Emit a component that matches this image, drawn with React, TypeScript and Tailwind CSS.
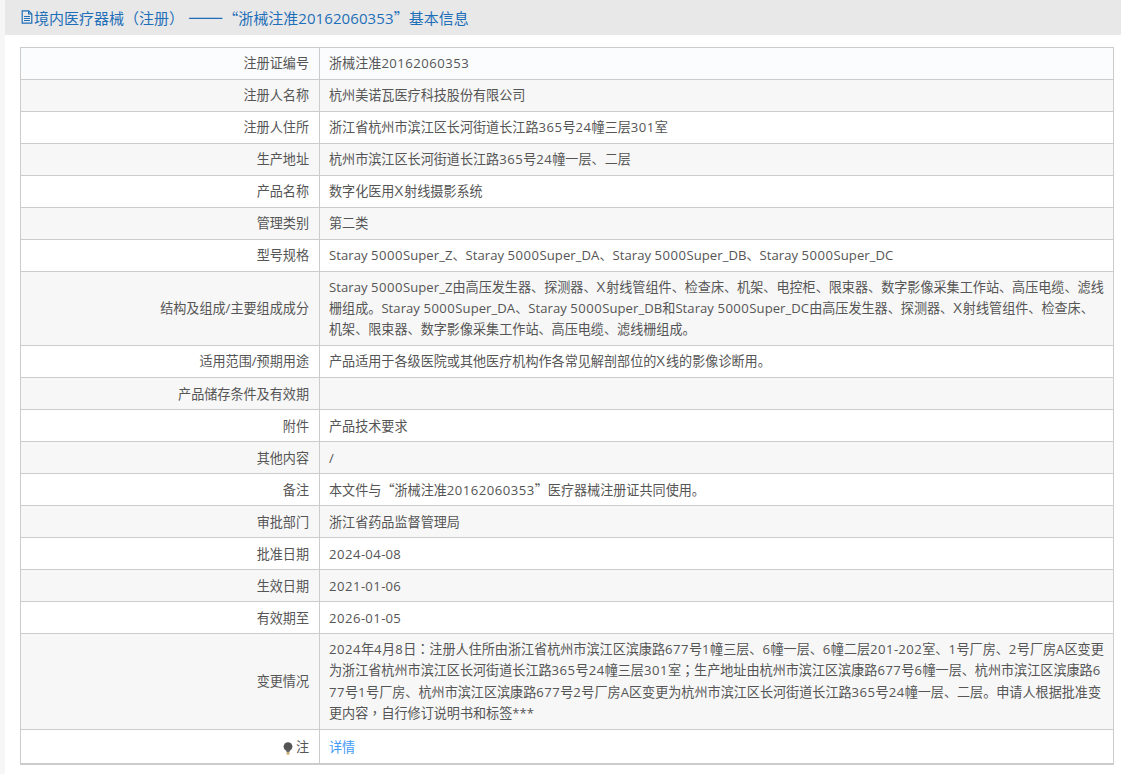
import React from 'react';

const rows: { label: string; value: string }[] = [
  { label: '注册证编号', value: '浙械注准20162060353' },
  { label: '注册人名称', value: '杭州美诺瓦医疗科技股份有限公司' },
  { label: '注册人住所', value: '浙江省杭州市滨江区长河街道长江路365号24幢三层301室' },
  { label: '生产地址', value: '杭州市滨江区长河街道长江路365号24幢一层、二层' },
  { label: '产品名称', value: '数字化医用X射线摄影系统' },
  { label: '管理类别', value: '第二类' },
  { label: '型号规格', value: 'Staray 5000Super_Z、Staray 5000Super_DA、Staray 5000Super_DB、Staray 5000Super_DC' },
  {
    label: '结构及组成/主要组成成分',
    value:
      'Staray 5000Super_Z由高压发生器、探测器、X射线管组件、检查床、机架、电控柜、限束器、数字影像采集工作站、高压电缆、滤线栅组成。Staray 5000Super_DA、Staray 5000Super_DB和Staray 5000Super_DC由高压发生器、探测器、X射线管组件、检查床、机架、限束器、数字影像采集工作站、高压电缆、滤线栅组成。',
  },
  { label: '适用范围/预期用途', value: '产品适用于各级医院或其他医疗机构作各常见解剖部位的X线的影像诊断用。' },
  { label: '产品储存条件及有效期', value: '' },
  { label: '附件', value: '产品技术要求' },
  { label: '其他内容', value: '/' },
  { label: '备注', value: '本文件与“浙械注准20162060353”医疗器械注册证共同使用。' },
  { label: '审批部门', value: '浙江省药品监督管理局' },
  { label: '批准日期', value: '2024-04-08' },
  { label: '生效日期', value: '2021-01-06' },
  { label: '有效期至', value: '2026-01-05' },
  {
    label: '变更情况',
    value:
      '2024年4月8日：注册人住所由浙江省杭州市滨江区滨康路677号1幢三层、6幢一层、6幢二层201-202室、1号厂房、2号厂房A区变更为浙江省杭州市滨江区长河街道长江路365号24幢三层301室；生产地址由杭州市滨江区滨康路677号6幢一层、杭州市滨江区滨康路677号1号厂房、杭州市滨江区滨康路677号2号厂房A区变更为杭州市滨江区长河街道长江路365号24幢一层、二层。申请人根据批准变更内容，自行修订说明书和标签***',
  },
];

// digits run wider than Open Sans, punctuation is full width and centred
const Txt = ({ text, title }: { text: string; title?: boolean }) => (
  <>
    {text.split(/(\d+|X(?=[射线])|[A-Za-z_]+|[：；，（）]+|[“”]|—+)/).map((part, i) => {
      if (!part) return null;
      if (/^\d/.test(part))
        return <span key={i} className={title ? 'tracking-[0.1px]' : 'tracking-[0.5px]'}>{part}</span>;
      if (part === 'X') return <span key={i} className="text-[15px] leading-none tracking-[1px]">{part}</span>;
      if (/^[A-Za-z_]/.test(part)) return <span key={i} className="tracking-[0.05px]">{part}</span>;
      if (/^[：；，（）]/.test(part))
        return <span key={i} className="font-['Noto_Sans_CJK_TC'] leading-none">{part}</span>;
      if (/^[“”]/.test(part))
        return <span key={i} className="font-['Noto_Sans_CJK_SC'] leading-none">{part}</span>;
      if (/^—/.test(part))
        return <span key={i} className="font-['Noto_Sans_CJK_SC'] text-[21px] leading-none">{part}</span>;
      return <span key={i}>{part}</span>;
    })}
  </>
);

const Bulb = () => (
  <svg viewBox="0 0 10 13" className="w-[10px] h-[13px] mr-[3px] shrink-0">
    <circle cx="5" cy="4.6" r="4.4" fill="#555" />
    <path d="M3 8h4l-.6 2.4H3.6z" fill="#666" />
    <path d="M3.6 10.6h2.8V12.6H3.6z" fill="#cfa95a" />
  </svg>
);

const FileIcon = () => (
  <svg viewBox="0 0 12 14" className="w-[12px] h-[14px] mr-px shrink-0" fill="none" stroke="#1f6fb8" strokeWidth="1.2">
    <path d="M1.2 .8h6.4l3.2 3.2v9.2H1.2z" />
    <path d="M7.6 .8V4h3.2M3 6.5h6M3 8.5h6M3 10.5h6" />
  </svg>
);

export default function App() {
  return (
    <div
      className="min-h-[774px] bg-[#f6f6f6] pl-[5px] text-[13.1px] text-[#555]"
      style={{ fontFamily: '"Open Sans", "Noto Sans CJK SC", sans-serif' }}
    >
      <div className="bg-white min-h-[774px]">
        <div className="h-[35px] bg-[#e8e8e8] border-b border-[#eaeaee] pl-[16px] flex items-center text-[15px] text-[#1f6fb8]">
          <FileIcon />
          <span><Txt title text="境内医疗器械（注册） ——“浙械注准20162060353”基本信息" /></span>
        </div>
        <div className="ml-[15px] mr-[7px] mt-3 border border-[#ccc] border-b-2">
          {rows.map((r, i) => {
            // rows in the lower half sit a pixel lower in their cell
            const pad = i >= 9 && i <= 16 ? 'pt-[6px] pb-[4px]' : 'py-[5px]';
            return (
              <div key={i} className={`flex border-b border-[#ccc] ${i === 0 ? 'bg-[#fbfcfe]' : i % 2 === 1 ? 'bg-[#f7f7f7]' : 'bg-white'}`}>
                <div className={`w-[299px] shrink-0 border-r border-[#ccc] flex items-center justify-end pr-[10px] leading-[21px] ${pad}`}>
                  {r.label}
                </div>
                <div className={`flex-1 pl-[9px] pr-[8px] min-h-[31px] break-all ${pad} ${i === rows.length - 1 ? 'leading-[21.25px]' : 'leading-[21px]'}`}>
                  <Txt text={r.value} />
                </div>
              </div>
            );
          })}
          <div className="flex bg-white">
            <div className="w-[299px] shrink-0 border-r border-[#ccc] flex items-center justify-end pr-[10px] pt-[3px] h-[33px]">
              <Bulb />注
            </div>
            <div className="flex-1 pl-[9px] pt-[3px] flex items-center text-[#3f9af5]">详情</div>
          </div>
        </div>
      </div>
    </div>
  );
}
